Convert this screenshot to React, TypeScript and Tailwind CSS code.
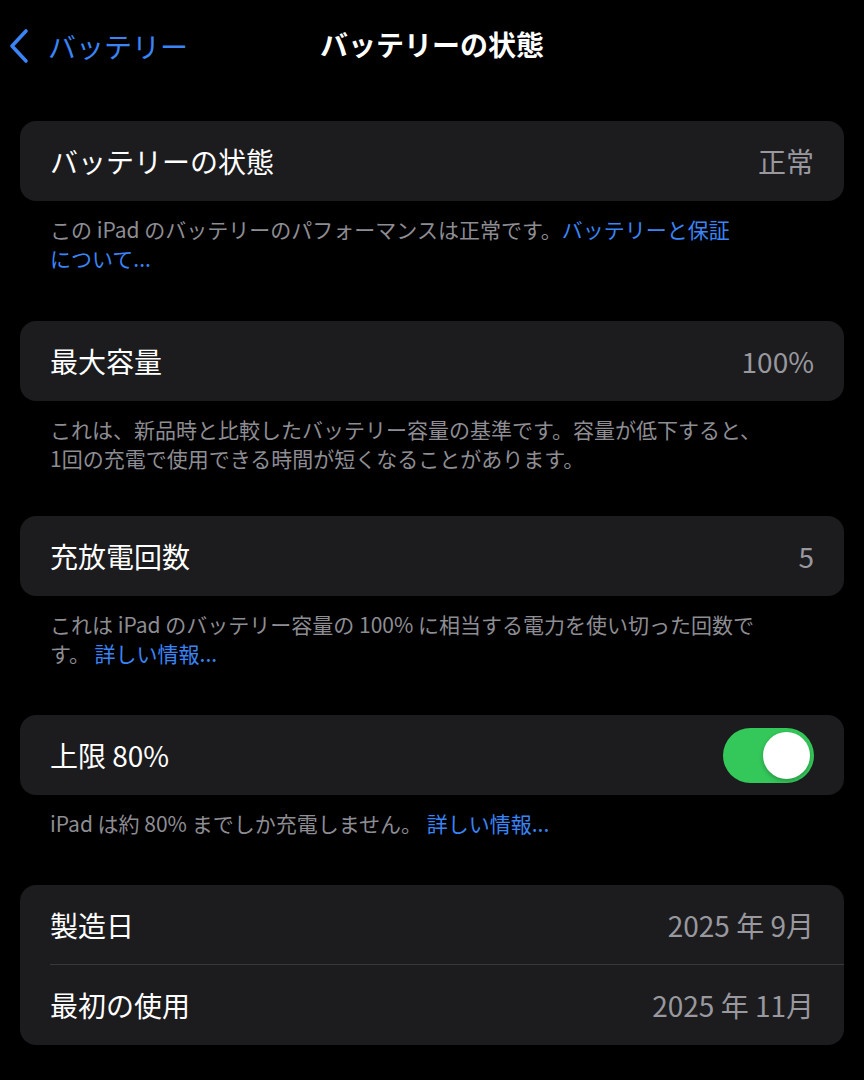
import React from 'react';

const FONT = { fontFamily: '"Noto Sans CJK JP", "Noto Sans", sans-serif' };

function Row({ label, value, divider }: { label: string; value?: React.ReactNode; divider?: boolean }) {
  return (
    <div className="relative flex items-center justify-between h-[80px] pl-[30px] pr-[30px]">
      <span className="text-[28px] text-white leading-none">{label}</span>
      {typeof value === 'string' ? (
        <span className="text-[28px] text-[#98989e] leading-none whitespace-pre">{value}</span>
      ) : (
        value
      )}
      {divider && <div className="absolute left-[30px] right-0 bottom-0 h-px bg-[#38383a]" />}
    </div>
  );
}

function Footer({ lines }: { lines: React.ReactNode[] }) {
  return (
    <div className="pt-[14px] px-[30px] text-[21px] leading-[29px] text-[#8d8d93]">
      {lines.map((l, i) => (
        <div key={i} className="whitespace-pre">{l}</div>
      ))}
    </div>
  );
}

function Link({ children }: { children: React.ReactNode }) {
  return <span className="text-[#3a84f5]">{children}</span>;
}

function Toggle() {
  return (
    <div className="w-[91px] h-[55px] rounded-full bg-[#34c759] flex items-center justify-end pr-[4px]">
      <div className="w-[47px] h-[47px] rounded-full bg-white shadow-[0_2px_4px_rgba(0,0,0,0.25)]" />
    </div>
  );
}

export default function App() {
  return (
    <div className="w-[864px] h-[1080px] bg-black overflow-hidden" style={FONT}>
      {/* Nav bar */}
      <div className="relative h-[88px] flex items-center justify-center">
        <div className="absolute left-[8px] top-[28px] flex items-center gap-[18px]">
          <svg width="22" height="36" viewBox="0 0 22 36" fill="none">
            <path d="M18 3 L4 18 L18 33" stroke="#3a84f5" strokeWidth="3.6" strokeLinecap="round" strokeLinejoin="round" />
          </svg>
          <span className="text-[28px] leading-none text-[#3a84f5]">バッテリー</span>
        </div>
        <span className="text-[28px] font-bold text-white leading-none">バッテリーの状態</span>
      </div>

      <div className="px-[20px] pt-[33px]">
        <div className="rounded-[16px] bg-[#1c1c1e]">
          <Row label="バッテリーの状態" value="正常" />
        </div>
        <Footer
          lines={[
            <>この iPad のバッテリーのパフォーマンスは正常です。<Link>バッテリーと保証</Link></>,
            <Link>について...</Link>,
          ]}
        />

        <div className="mt-[48px] rounded-[16px] bg-[#1c1c1e]">
          <Row label="最大容量" value="100%" />
        </div>
        <Footer
          lines={[
            'これは、新品時と比較したバッテリー容量の基準です。容量が低下すると、',
            '1回の充電で使用できる時間が短くなることがあります。',
          ]}
        />

        <div className="mt-[43px] rounded-[16px] bg-[#1c1c1e]">
          <Row label="充放電回数" value="5" />
        </div>
        <Footer
          lines={[
            'これは iPad のバッテリー容量の 100% に相当する電力を使い切った回数で',
            <>す。 <Link>詳しい情報...</Link></>,
          ]}
        />

        <div className="mt-[47px] rounded-[16px] bg-[#1c1c1e]">
          <Row label="上限 80%" value={<Toggle />} />
        </div>
        <Footer lines={[<>iPad は約 80% までしか充電しません。 <Link>詳しい情報...</Link></>]} />

        <div className="mt-[47px] rounded-[16px] bg-[#1c1c1e] overflow-hidden">
          <Row label="製造日" value="2025 年 9月" divider />
          <Row label="最初の使用" value="2025 年 11月" />
        </div>
      </div>
    </div>
  );
}
